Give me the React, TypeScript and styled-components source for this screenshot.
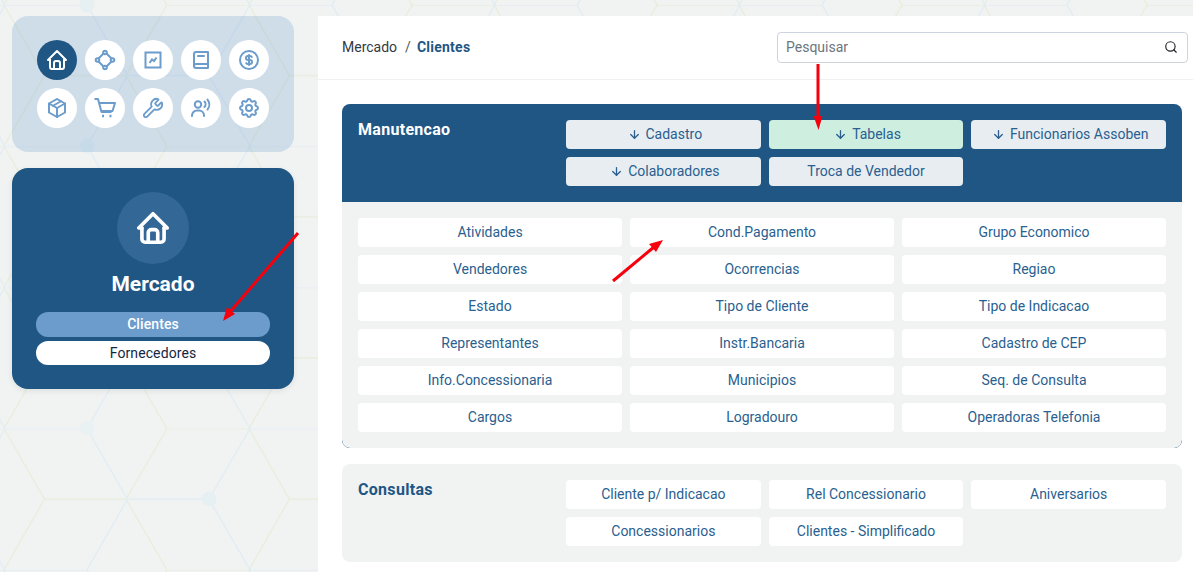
import React from "react";
import styled, { createGlobalStyle } from "styled-components";
import { ArrowDown, Search, Wrench } from "lucide-react";
import { TbBook2, TbCoin, TbHome, TbPackage, TbSettings } from "react-icons/tb";

const Global = createGlobalStyle`
  html, body {
    margin: 0;
    height: 100%;
    overflow: hidden;
    background: #f1f3f3;
    font-family: Roboto, "Liberation Sans", sans-serif;
  }
  #root { height: 100%; }
  * { box-sizing: border-box; }
`;

const Shell = styled.div`
  position: relative;
  display: flex;
  height: 572px;
  overflow: hidden;
`;

const Backdrop = styled.svg`
  position: absolute;
  top: 0;
  left: 0;
  width: 100%;
  height: 100%;
`;

const Sidebar = styled.aside`
  position: relative;
  flex: 0 0 318px;
  display: flex;
  flex-direction: column;
  gap: 16px;
  padding: 16px 24px 0 12px;
`;

const MenuCard = styled.nav`
  display: grid;
  grid-template-columns: repeat(5, 40px);
  justify-content: center;
  align-content: center;
  gap: 8px;
  height: 136px;
  border-radius: 16px;
  background: rgba(108, 156, 203, 0.25);
`;

const MenuIcon = styled.button<{ $active?: boolean }>`
  display: flex;
  align-items: center;
  justify-content: center;
  width: 40px;
  height: 40px;
  padding: 0;
  border: 0;
  border-radius: 50%;
  background: ${(p) => (p.$active ? "#1f5684" : "#fff")};
  color: ${(p) => (p.$active ? "#fff" : "#6c9ccb")};
`;

const ModuleCard = styled.div`
  display: flex;
  flex-direction: column;
  align-items: center;
  height: 221px;
  padding: 24px 24px 0;
  border-radius: 16px;
  background: #1f5684;
  box-shadow: 0 2px 6px rgba(0, 0, 0, 0.08);
`;

const ModuleBadge = styled.div`
  display: flex;
  align-items: center;
  justify-content: center;
  width: 72px;
  height: 72px;
  border-radius: 50%;
  background: #336796;
  color: #fff;
`;

const ModuleTitle = styled.h2`
  margin: 8px 0 16px;
  font-size: 21px;
  line-height: 24px;
  font-weight: 700;
  color: #fff;
`;

const Pill = styled.button<{ $active?: boolean }>`
  width: 100%;
  height: 24.5px;
  margin-bottom: 4px;
  padding: 0;
  border: 0;
  border-radius: 12px;
  font-family: inherit;
  font-size: 14px;
  letter-spacing: 0.1px;
  font-weight: ${(p) => (p.$active ? 500 : 400)};
  background: ${(p) => (p.$active ? "#6c9ccb" : "#fff")};
  color: ${(p) => (p.$active ? "#fff" : "#14263f")};
`;

const Main = styled.main`
  position: relative;
  flex: 1;
  margin-top: 16px;
  background: #fff;
`;

const Header = styled.header`
  display: flex;
  align-items: center;
  justify-content: space-between;
  height: 64px;
  padding: 0 5px 1px 24px;
  border-bottom: 1px solid #f0f1f2;
`;

const Crumbs = styled.div`
  font-size: 14px;
  color: #333a42;
`;

const CrumbSlash = styled.span`
  margin: 0 6px 0 8px;
  color: #555;
`;

const CrumbCurrent = styled.strong`
  font-weight: 700;
  letter-spacing: 0.25px;
  color: #1f5684;
`;

const SearchBox = styled.label`
  display: flex;
  align-items: center;
  justify-content: space-between;
  width: 411px;
  height: 31px;
  padding: 0 9px 0 8px;
  border: 1px solid #ced4de;
  border-radius: 4px;
  font-size: 14px;
  color: #6c757d;
  svg { color: #212529; }
`;

const Content = styled.div`
  display: flex;
  flex-direction: column;
  gap: 16px;
  padding: 24px 11px 0 24px;
`;

const Section = styled.section<{ $dark?: boolean }>`
  border-radius: 8px;
  overflow: hidden;
  background: ${(p) => (p.$dark ? "#1f5684" : "#f1f3f3")};
`;

const SectionHead = styled.div`
  display: grid;
  grid-template-columns: 200px 1fr;
  gap: 8px;
  padding: 16px;
`;

const SectionTitle = styled.h3<{ $dark?: boolean }>`
  margin: 0;
  font-size: 16px;
  line-height: 20px;
  letter-spacing: 0.3px;
  font-weight: 700;
  color: ${(p) => (p.$dark ? "#fff" : "#1f5684")};
`;

const ActionGrid = styled.div`
  display: grid;
  grid-template-columns: repeat(3, 1fr);
  gap: 8px;
`;

const SectionBody = styled.div`
  display: grid;
  grid-template-columns: repeat(3, 1fr);
  gap: 8px;
  padding: 16px;
  border-radius: 0 0 8px 8px;
  background: #f1f3f3;
`;

const Action = styled.button<{ $tone?: "white" | "grey" | "green" }>`
  display: flex;
  align-items: center;
  justify-content: center;
  gap: 5px;
  height: 29px;
  padding: 0 0 2px;
  border: 0;
  border-radius: 4px;
  font-family: inherit;
  font-size: 14px;
  color: #2a5f8f;
  background: ${(p) => (p.$tone === "green" ? "#ceeee0" : p.$tone === "grey" ? "#e8edf2" : "#fff")};
  svg { margin: 2px 0 0 3px; }
`;

const Arrows = styled.svg`
  position: absolute;
  top: 0;
  left: 0;
  width: 1193px;
  height: 572px;
  pointer-events: none;
`;

const Topology = () => (
  <svg width="24" height="24" viewBox="0 0 24 24" fill="none" stroke="currentColor" strokeWidth="2">
    <circle cx="12" cy="4.500" r="1.800" />
    <circle cx="4.500" cy="12" r="1.800" />
    <circle cx="19.500" cy="12" r="1.800" />
    <circle cx="12" cy="19.500" r="1.800" />
    <path d="M10.500 5.500 5.500 10.500M13.500 5.500l5 5M5.500 13.500l5 5M18.500 13.500l-5 5" />
  </svg>
);

const ChartBox = () => (
  <svg width="24" height="24" viewBox="0 0 24 24" fill="none" stroke="currentColor" strokeWidth="2">
    <path d="M4.500 4.500h15v15h-15z" />
    <path d="m8.500 15 2.500-3.500 2 1.500 2.500-3.500" />
  </svg>
);

const Cart = () => (
  <svg width="24" height="24" viewBox="0 0 24 24" fill="none" stroke="currentColor" strokeWidth="2" strokeLinejoin="round">
    <path d="M1.500 3H5l3.500 13h10" />
    <path d="M6 7h16l-2.500 8H8.500" />
    <path d="M9 20h2M16.500 20h2" strokeWidth="2.500" />
  </svg>
);

const UserVoice = () => (
  <svg width="24" height="24" viewBox="0 0 24 24" fill="none" stroke="currentColor" strokeWidth="2" strokeLinecap="round">
    <circle cx="9" cy="8.500" r="3.200" />
    <path d="M3 20v-.500a5 5 0 0 1 5-5h2a5 5 0 0 1 5 5v.500" />
    <path d="M15.500 5.500a4 4 0 0 1 0 5.500M18.500 3.500a8 8 0 0 1 0 10" />
  </svg>
);

const menu = [
  <TbHome size={24} />,
  <Topology />,
  <ChartBox />,
  <TbBook2 size={24} />,
  <TbCoin size={24} />,
  <TbPackage size={24} />,
  <Cart />,
  <Wrench size={22} strokeWidth={2} />,
  <UserVoice />,
  <TbSettings size={24} />,
];

const maintenance = [
  { label: "Cadastro", arrow: true },
  { label: "Tabelas", arrow: true, green: true },
  { label: "Funcionarios Assoben", arrow: true },
  { label: "Colaboradores", arrow: true },
  { label: "Troca de Vendedor" },
];

const tables = [
  "Atividades", "Cond.Pagamento", "Grupo Economico",
  "Vendedores", "Ocorrencias", "Regiao",
  "Estado", "Tipo de Cliente", "Tipo de Indicacao",
  "Representantes", "Instr.Bancaria", "Cadastro de CEP",
  "Info.Concessionaria", "Municipios", "Seq. de Consulta",
  "Cargos", "Logradouro", "Operadoras Telefonia",
];

const queries = [
  "Cliente p/ Indicacao", "Rel Concessionario", "Aniversarios",
  "Concessionarios", "Clientes - Simplificado",
];

export default function App(): JSX.Element {
  return (
    <>
      <Global />
      <Shell>
        <Backdrop>
          <defs>
            <pattern id="hexBlue" patternUnits="userSpaceOnUse" x="5" y="5" width="245" height="141.2">
              <path d="M0 0H82L122.500 70.600 82 141.200M122.500 70.600H204L245 0M204 70.600 245 141.200" fill="none" stroke="#e2edf3" strokeWidth="1.500" />
            </pattern>
            <pattern id="hexOlive" patternUnits="userSpaceOnUse" x="167" y="5" width="245" height="141.2">
              <path d="M0 0H82L122.500 70.600 82 141.200M122.500 70.600H204L245 0M204 70.600 245 141.200" fill="none" stroke="#e9eede" strokeWidth="1.500" />
            </pattern>
          </defs>
          <rect width="100%" height="100%" fill="url(#hexOlive)" />
          <rect width="100%" height="100%" fill="url(#hexBlue)" />
          <circle cx="87" cy="5" r="7.500" fill="#e6eff1" />
          <circle cx="87" cy="146" r="7.500" fill="#e6eff1" />
          <circle cx="87" cy="428" r="7.500" fill="#eaf1f3" />
          <circle cx="209" cy="499" r="7.500" fill="#e6eff1" />
        </Backdrop>

        <Sidebar>
          <MenuCard>
            {menu.map((icon, i) => (
              <MenuIcon key={i} $active={i === 0}>{icon}</MenuIcon>
            ))}
          </MenuCard>
          <ModuleCard>
            <ModuleBadge>
              <TbHome size={38} strokeWidth={2.3} />
            </ModuleBadge>
            <ModuleTitle>Mercado</ModuleTitle>
            <Pill $active>Clientes</Pill>
            <Pill>Fornecedores</Pill>
          </ModuleCard>
        </Sidebar>

        <Main>
          <Header>
            <Crumbs>
              Mercado<CrumbSlash>/</CrumbSlash><CrumbCurrent>Clientes</CrumbCurrent>
            </Crumbs>
            <SearchBox>
              Pesquisar
              <Search size={14} strokeWidth={2} />
            </SearchBox>
          </Header>

          <Content>
            <Section $dark>
              <SectionHead>
                <SectionTitle $dark>Manutencao</SectionTitle>
                <ActionGrid>
                  {maintenance.map((item) => (
                    <Action key={item.label} $tone={item.green ? "green" : "grey"}>
                      {item.arrow && <ArrowDown size={13} strokeWidth={2.4} />}
                      {item.label}
                    </Action>
                  ))}
                </ActionGrid>
              </SectionHead>
              <SectionBody>
                {tables.map((label) => (
                  <Action key={label} $tone="white">{label}</Action>
                ))}
              </SectionBody>
            </Section>

            <Section>
              <SectionHead>
                <SectionTitle>Consultas</SectionTitle>
                <ActionGrid>
                  {queries.map((label) => (
                    <Action key={label} $tone="white">{label}</Action>
                  ))}
                </ActionGrid>
              </SectionHead>
            </Section>
          </Content>
        </Main>

        {/* red annotation arrows drawn over the page */}
        <Arrows>
          <g stroke="#f5000c" strokeWidth="3" fill="none">
            <path d="M818 64V122" />
            <path d="M298 233 229 313" />
            <path d="M613 281 654 247" />
          </g>
          <g fill="#f5000c">
            <path d="M813.500 116H822.500L818.500 130Z" />
            <path d="M223 321 227 307 235 314Z" />
            <path d="M663 240 656 252 649 244Z" />
          </g>
        </Arrows>
      </Shell>
    </>
  );
}
